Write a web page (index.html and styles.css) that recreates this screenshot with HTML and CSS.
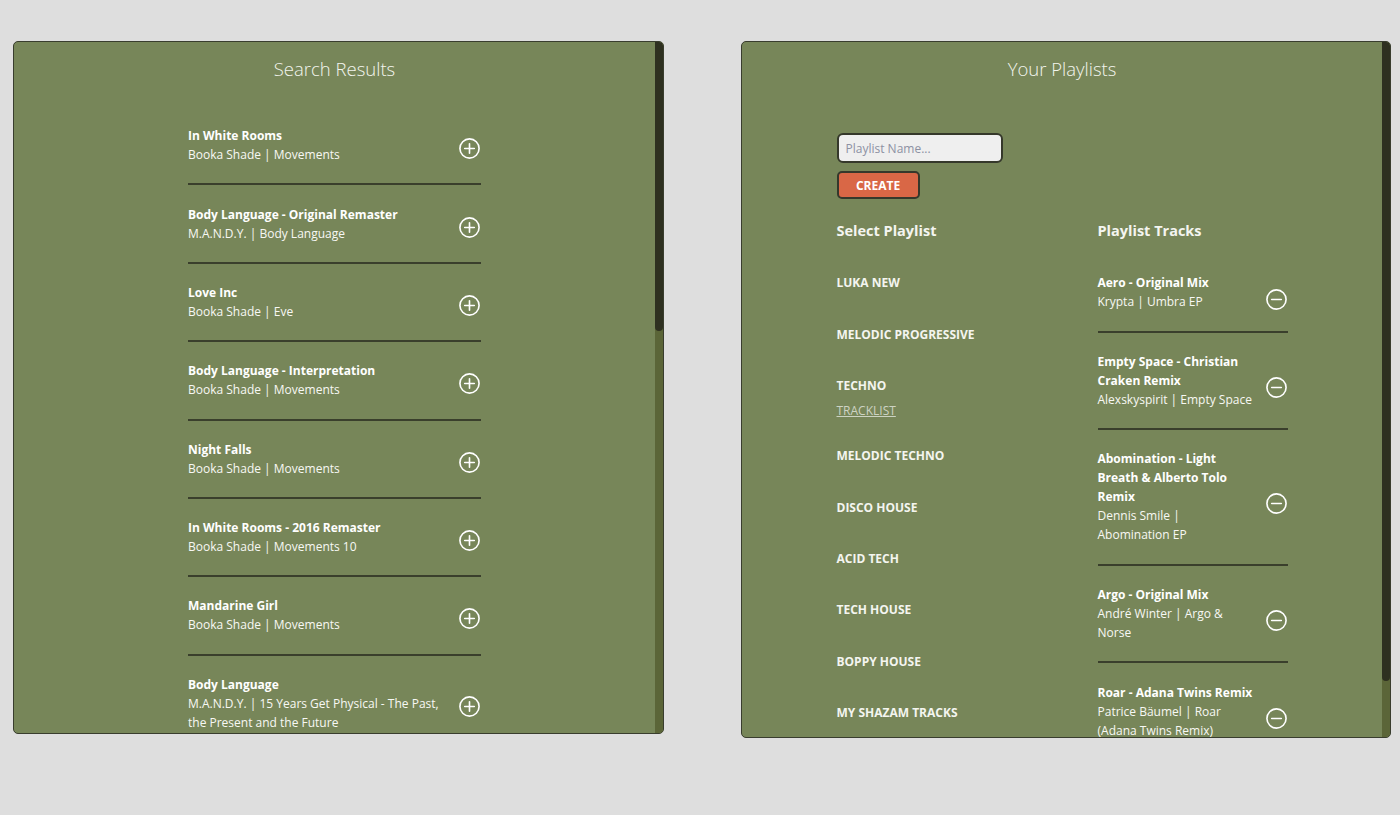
FILE: index.html
```html
<!DOCTYPE html>
<html lang="en">
<head>
<meta charset="utf-8">
<title>Playlists</title>
<link rel="stylesheet" href="styles.css">
</head>
<body>
<div class="app">
  <section class="panel panel-search">
    <div class="panel-scroll">
      <h2 class="panel-title">Search Results</h2>
      <ul class="track-list track-list-wide">
        <li class="track"><div class="track-info"><p class="track-name">In White Rooms</p><p class="track-meta">Booka Shade | Movements</p></div><button class="track-action add" aria-label="Add"><svg viewBox="0 0 24 24"><circle cx="12" cy="12" r="10"/><path d="M12 7v10M7 12h10"/></svg></button></li>
        <li class="track"><div class="track-info"><p class="track-name">Body Language - Original Remaster</p><p class="track-meta">M.A.N.D.Y. | Body Language</p></div><button class="track-action add" aria-label="Add"><svg viewBox="0 0 24 24"><circle cx="12" cy="12" r="10"/><path d="M12 7v10M7 12h10"/></svg></button></li>
        <li class="track"><div class="track-info"><p class="track-name">Love Inc</p><p class="track-meta">Booka Shade | Eve</p></div><button class="track-action add" aria-label="Add"><svg viewBox="0 0 24 24"><circle cx="12" cy="12" r="10"/><path d="M12 7v10M7 12h10"/></svg></button></li>
        <li class="track"><div class="track-info"><p class="track-name">Body Language - Interpretation</p><p class="track-meta">Booka Shade | Movements</p></div><button class="track-action add" aria-label="Add"><svg viewBox="0 0 24 24"><circle cx="12" cy="12" r="10"/><path d="M12 7v10M7 12h10"/></svg></button></li>
        <li class="track"><div class="track-info"><p class="track-name">Night Falls</p><p class="track-meta">Booka Shade | Movements</p></div><button class="track-action add" aria-label="Add"><svg viewBox="0 0 24 24"><circle cx="12" cy="12" r="10"/><path d="M12 7v10M7 12h10"/></svg></button></li>
        <li class="track"><div class="track-info"><p class="track-name">In White Rooms - 2016 Remaster</p><p class="track-meta">Booka Shade | Movements 10</p></div><button class="track-action add" aria-label="Add"><svg viewBox="0 0 24 24"><circle cx="12" cy="12" r="10"/><path d="M12 7v10M7 12h10"/></svg></button></li>
        <li class="track"><div class="track-info"><p class="track-name">Mandarine Girl</p><p class="track-meta">Booka Shade | Movements</p></div><button class="track-action add" aria-label="Add"><svg viewBox="0 0 24 24"><circle cx="12" cy="12" r="10"/><path d="M12 7v10M7 12h10"/></svg></button></li>
        <li class="track"><div class="track-info"><p class="track-name">Body Language</p><p class="track-meta">M.A.N.D.Y. | 15 Years Get Physical - The Past, the Present and the Future</p></div><button class="track-action add" aria-label="Add"><svg viewBox="0 0 24 24"><circle cx="12" cy="12" r="10"/><path d="M12 7v10M7 12h10"/></svg></button></li>
      </ul>
    </div>
    <div class="scrollbar" aria-hidden="true"><div class="scrollbar-thumb thumb-search"></div></div>
  </section>

  <section class="panel panel-playlists">
    <div class="panel-scroll">
      <h2 class="panel-title">Your Playlists</h2>
      <div class="playlist-body">
        <form class="create-form">
          <input class="name-input" type="text" placeholder="Playlist Name...">
          <button class="create-btn" type="button">CREATE</button>
        </form>
        <div class="columns">
          <div class="col col-select">
            <h3 class="col-title">Select Playlist</h3>
            <ul class="playlist-list">
              <li class="playlist">LUKA NEW</li>
              <li class="playlist">MELODIC PROGRESSIVE</li>
              <li class="playlist">TECHNO<a class="tracklist-link" href="#">TRACKLIST</a></li>
              <li class="playlist">MELODIC TECHNO</li>
              <li class="playlist">DISCO HOUSE</li>
              <li class="playlist">ACID TECH</li>
              <li class="playlist">TECH HOUSE</li>
              <li class="playlist">BOPPY HOUSE</li>
              <li class="playlist">MY SHAZAM TRACKS</li>
            </ul>
          </div>
          <div class="col col-tracks">
            <h3 class="col-title">Playlist Tracks</h3>
            <ul class="track-list track-list-narrow">
              <li class="track"><div class="track-info"><p class="track-name">Aero - Original Mix</p><p class="track-meta">Krypta | Umbra EP</p></div><button class="track-action remove" aria-label="Remove"><svg viewBox="0 0 24 24"><circle cx="12" cy="12" r="10"/><path d="M7 12h10"/></svg></button></li>
              <li class="track"><div class="track-info"><p class="track-name">Empty Space - Christian Craken Remix</p><p class="track-meta">Alexskyspirit | Empty Space</p></div><button class="track-action remove" aria-label="Remove"><svg viewBox="0 0 24 24"><circle cx="12" cy="12" r="10"/><path d="M7 12h10"/></svg></button></li>
              <li class="track"><div class="track-info"><p class="track-name">Abomination - Light Breath &amp; Alberto Tolo Remix</p><p class="track-meta">Dennis Smile | Abomination EP</p></div><button class="track-action remove" aria-label="Remove"><svg viewBox="0 0 24 24"><circle cx="12" cy="12" r="10"/><path d="M7 12h10"/></svg></button></li>
              <li class="track"><div class="track-info"><p class="track-name">Argo - Original Mix</p><p class="track-meta">André Winter | Argo &amp; Norse</p></div><button class="track-action remove" aria-label="Remove"><svg viewBox="0 0 24 24"><circle cx="12" cy="12" r="10"/><path d="M7 12h10"/></svg></button></li>
              <li class="track"><div class="track-info"><p class="track-name">Roar - Adana Twins Remix</p><p class="track-meta">Patrice Bäumel | Roar (Adana Twins Remix)</p></div><button class="track-action remove" aria-label="Remove"><svg viewBox="0 0 24 24"><circle cx="12" cy="12" r="10"/><path d="M7 12h10"/></svg></button></li>
            </ul>
          </div>
        </div>
      </div>
    </div>
    <div class="scrollbar" aria-hidden="true"><div class="scrollbar-thumb thumb-playlists"></div></div>
  </section>
</div>
</body>
</html>
```

FILE: styles.css
```css
* { box-sizing: border-box; }

html, body {
  margin: 0;
  padding: 0;
}

body {
  background: #dedede;
  font-family: "Open Sans", "Noto Sans", sans-serif;
  color: #ffffff;
  width: 1400px;
  height: 815px;
  overflow: hidden;
}

.app {
  display: flex;
  align-items: flex-start;
  gap: 77px;
  padding: 41px 0 0 13px;
}

.panel {
  position: relative;
  background: #778659;
  border: 1px solid #393d2e;
  border-radius: 5px;
  overflow: hidden;
}

.panel-scroll {
  height: 100%;
  overflow: hidden;
  padding-right: 8px;
}

/* decorative scrollbar overlay drawn over the panel's right edge */
.scrollbar {
  position: absolute;
  top: 0;
  right: 0;
  bottom: 0;
  width: 8px;
  background: #5b6538;
}

.scrollbar-thumb {
  width: 8px;
  background: #2e3020;
  border-radius: 0 4px 4px 4px;
}

.thumb-search { height: 289px; }
.thumb-playlists { height: 639px; }

.panel-search {
  width: 651px;
  height: 693px;
}

.panel-playlists {
  width: 650px;
  height: 697px;
}

.panel-title {
  margin: 0;
  padding: 14px 0 0;
  text-align: center;
  font-size: 18.5px;
  line-height: 25px;
  font-weight: 300;
  color: #f3f5ee;
}

.track-list {
  list-style: none;
  margin: 0;
  padding: 0;
}

.track-list-wide {
  width: 293px;
  margin: 26px auto 0;
}

.track {
  display: flex;
  align-items: center;
  justify-content: space-between;
  padding: 19.2px 0;
  border-bottom: 2px solid #3a3f2c;
}

.track-list-narrow .track {
  padding: 19.3px 0;
}

.track-info p {
  margin: 0;
  font-size: 12px;
  line-height: 19px;
}

.track-name {
  font-weight: 700;
  color: #ffffff;
}

.track-meta {
  color: #f7f8f4;
}

.track-list-wide .track-info {
  width: 262px;
}

.track-action {
  flex: none;
  width: 23px;
  height: 23px;
  padding: 0;
  border: none;
  background: none;
  cursor: pointer;
}

.track-action svg {
  display: block;
  width: 23px;
  height: 23px;
  fill: none;
  stroke: #ffffff;
  stroke-width: 1.7;
  stroke-linecap: round;
}

.add { margin-top: 7px; }
.remove { margin-top: 14px; }

.playlist-body {
  width: 451px;
  margin: 0 auto;
  padding: 52px 0 40px;
}

.create-form {
  display: flex;
  flex-direction: column;
  align-items: flex-start;
  gap: 8px;
}

.name-input {
  width: 166px;
  height: 30px;
  border: 2px solid #35382b;
  border-radius: 6px;
  background: #efefef;
  padding: 0 7px;
  font-family: "Open Sans", "Noto Sans", sans-serif;
  font-size: 12px;
  color: #333;
}
.name-input::placeholder {
  color: #8d91a3;
}

.create-btn {
  width: 83px;
  height: 28px;
  background: #d96746;
  border: 2px solid #35382b;
  border-radius: 5px;
  color: #ffffff;
  font-family: "Open Sans", "Noto Sans", sans-serif;
  font-weight: 700;
  font-size: 12px;
  padding: 0;
}

.columns {
  display: flex;
  margin-top: 21px;
}

.col-select { width: 261px; }
.col-tracks { width: 190px; }

.col-title {
  margin: 0;
  font-size: 14.5px;
  line-height: 22px;
  font-weight: 700;
  color: #f4f5f0;
}

.playlist-list {
  list-style: none;
  margin: 15px 0 0;
  padding: 0;
}

.playlist {
  padding: 16.2px 0;
  font-size: 12px;
  line-height: 19px;
  font-weight: 700;
  color: #f4f5f0;
}

.tracklist-link {
  display: block;
  margin: 10px 0 -3px;
  line-height: 12px;
  font-weight: 400;
  color: #cdd3c3;
  text-decoration: underline;
}

.track-list-narrow {
  margin-top: 12px;
}

.track-list-narrow .track-info {
  width: 157px;
}
```
